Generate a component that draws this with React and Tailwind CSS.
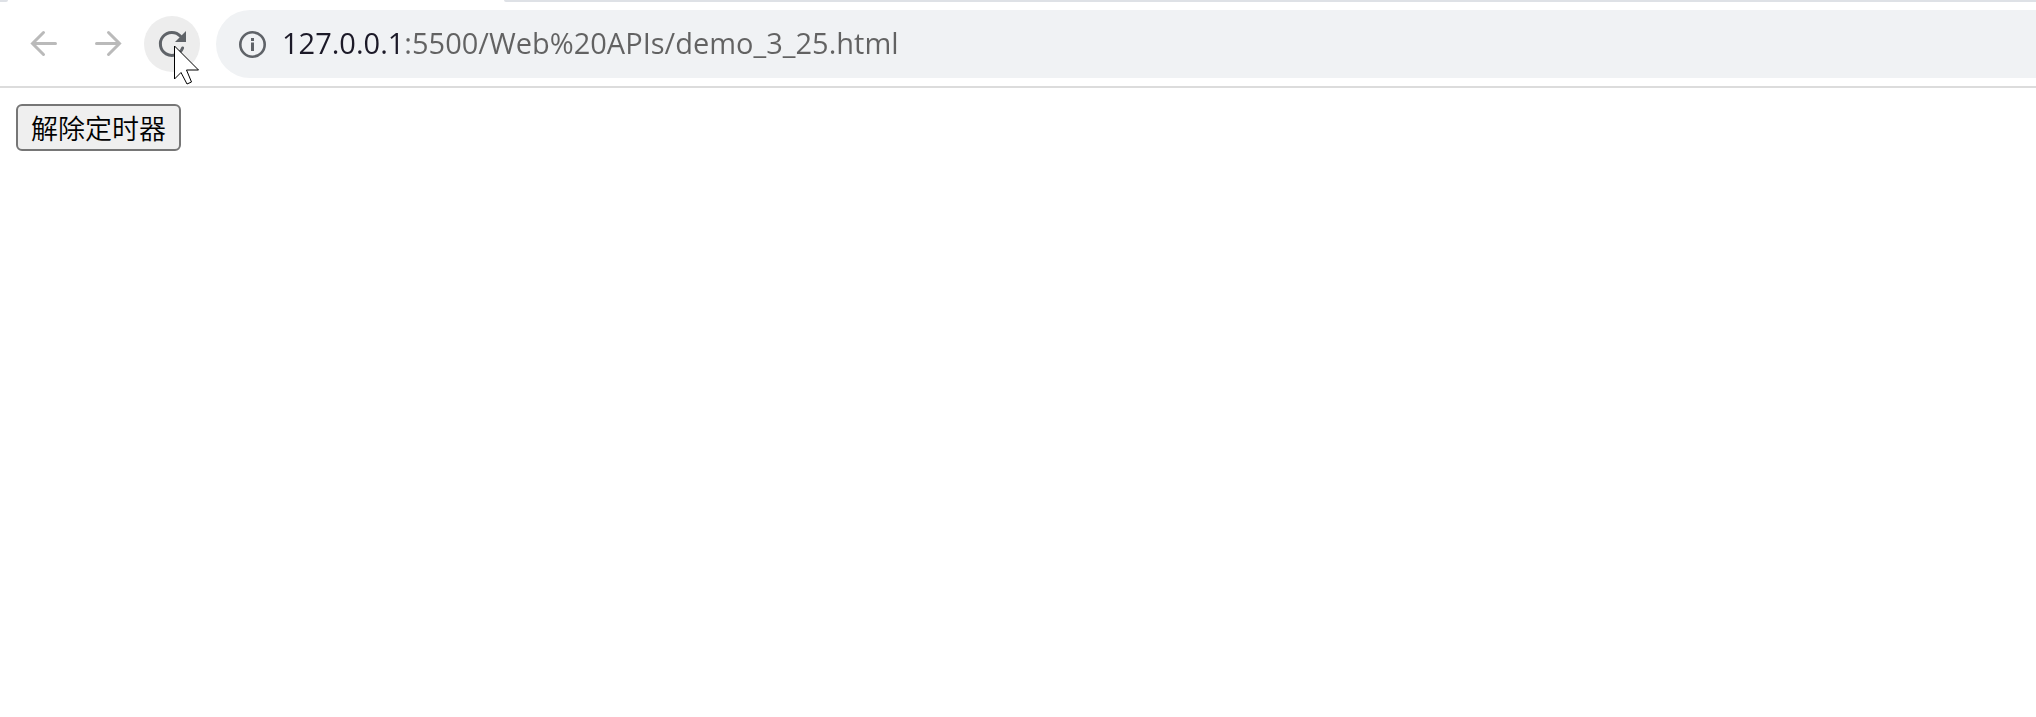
function TabStrip() {
  return (
    <div className="flex h-0.5">
      <div className="w-2 bg-[#dee1e6] rounded-br-full" />
      <div className="w-[496px]" />
      <div className="flex-1 bg-[#dee1e6] rounded-bl-full" />
    </div>
  )
}

function NavButton({ label, className = '', children }) {
  return (
    <button
      type="button"
      aria-label={label}
      className={`relative size-14 shrink-0 rounded-full ${className}`}
    >
      {children}
    </button>
  )
}

function BackIcon() {
  return (
    <svg viewBox="0 0 56 56" className="size-14" fill="none" stroke="#bababa" strokeWidth="3" strokeLinecap="round">
      <path d="M39.5 27.5H17M27.5 16.5l-11 11 11 11" />
    </svg>
  )
}

function ForwardIcon() {
  return (
    <svg viewBox="0 0 56 56" className="size-14" fill="none" stroke="#bababa" strokeWidth="3" strokeLinecap="round">
      <path d="M16.5 27.5H39M28.5 16.5l11 11-11 11" />
    </svg>
  )
}

function ReloadIcon() {
  return (
    <svg viewBox="0 0 56 56" className="size-14">
      <path
        d="M36.5 20.3A11.5 11.5 0 1 0 38.6 32"
        fill="none"
        stroke="#5f6368"
        strokeWidth="3"
        strokeLinecap="round"
      />
      <path d="M42 15v11H31z" fill="#5f6368" />
    </svg>
  )
}

function Cursor() {
  return (
    <svg viewBox="0 0 26 40" className="absolute left-[30px] top-[29px] z-10 w-[26px] h-10 pointer-events-none">
      <path
        d="M.5 1v33l6.5-6.5 6 11.5 4.500-2-5-12h12z"
        fill="#fff"
        stroke="#000"
        strokeWidth="1"
      />
    </svg>
  )
}

function InfoIcon() {
  return (
    <svg viewBox="0 0 28 28" className="size-7 shrink-0">
      <circle cx="14.5" cy="14.5" r="12.2" fill="none" stroke="#5f6368" strokeWidth="2.6" />
      <path d="M13 8h3v3h-3zM13 12.5h3v8.5h-3z" fill="#5f6368" />
    </svg>
  )
}

function Toolbar() {
  return (
    <div className="flex items-center border-b-2 border-[#dcdcdc] pt-2 pb-2 pl-4">
      <div className="flex gap-2 mr-4">
        <NavButton label="Back">
          <BackIcon />
        </NavButton>
        <NavButton label="Forward">
          <ForwardIcon />
        </NavButton>
        <NavButton label="Reload" className="bg-[#ededed]">
          <ReloadIcon />
          <Cursor />
        </NavButton>
      </div>

      {/* Address bar runs off the right edge of the window */}
      <div className="flex flex-1 items-center gap-4 h-[68px] pl-[22px] rounded-l-full bg-[#f0f2f4]">
        <InfoIcon />
        {/* Host is darker than the rest of the address */}
        <input
          type="text"
          aria-label="Address"
          defaultValue="127.0.0.1:5500/Web%20APIs/demo_3_25.html"
          className="flex-1 min-w-0 h-11 pb-1 text-[29px] leading-10 text-transparent bg-clip-text bg-[linear-gradient(to_right,#1c1a28_121px,#626262_121px)] font-['Open_Sans',sans-serif] outline-none"
        />
      </div>
    </div>
  )
}

function App() {
  return (
    <div className="min-h-screen bg-white overflow-x-hidden">
      <TabStrip />
      <Toolbar />
      <main className="p-4">
        <button
          type="button"
          className="h-[47px] px-[13px] border-2 border-[#767676] rounded-md bg-[#efefef] text-black text-[27px] leading-10 font-[350] font-['Noto_Sans_CJK_SC',sans-serif]"
        >
          解除定时器
        </button>
      </main>
    </div>
  )
}

export default App
